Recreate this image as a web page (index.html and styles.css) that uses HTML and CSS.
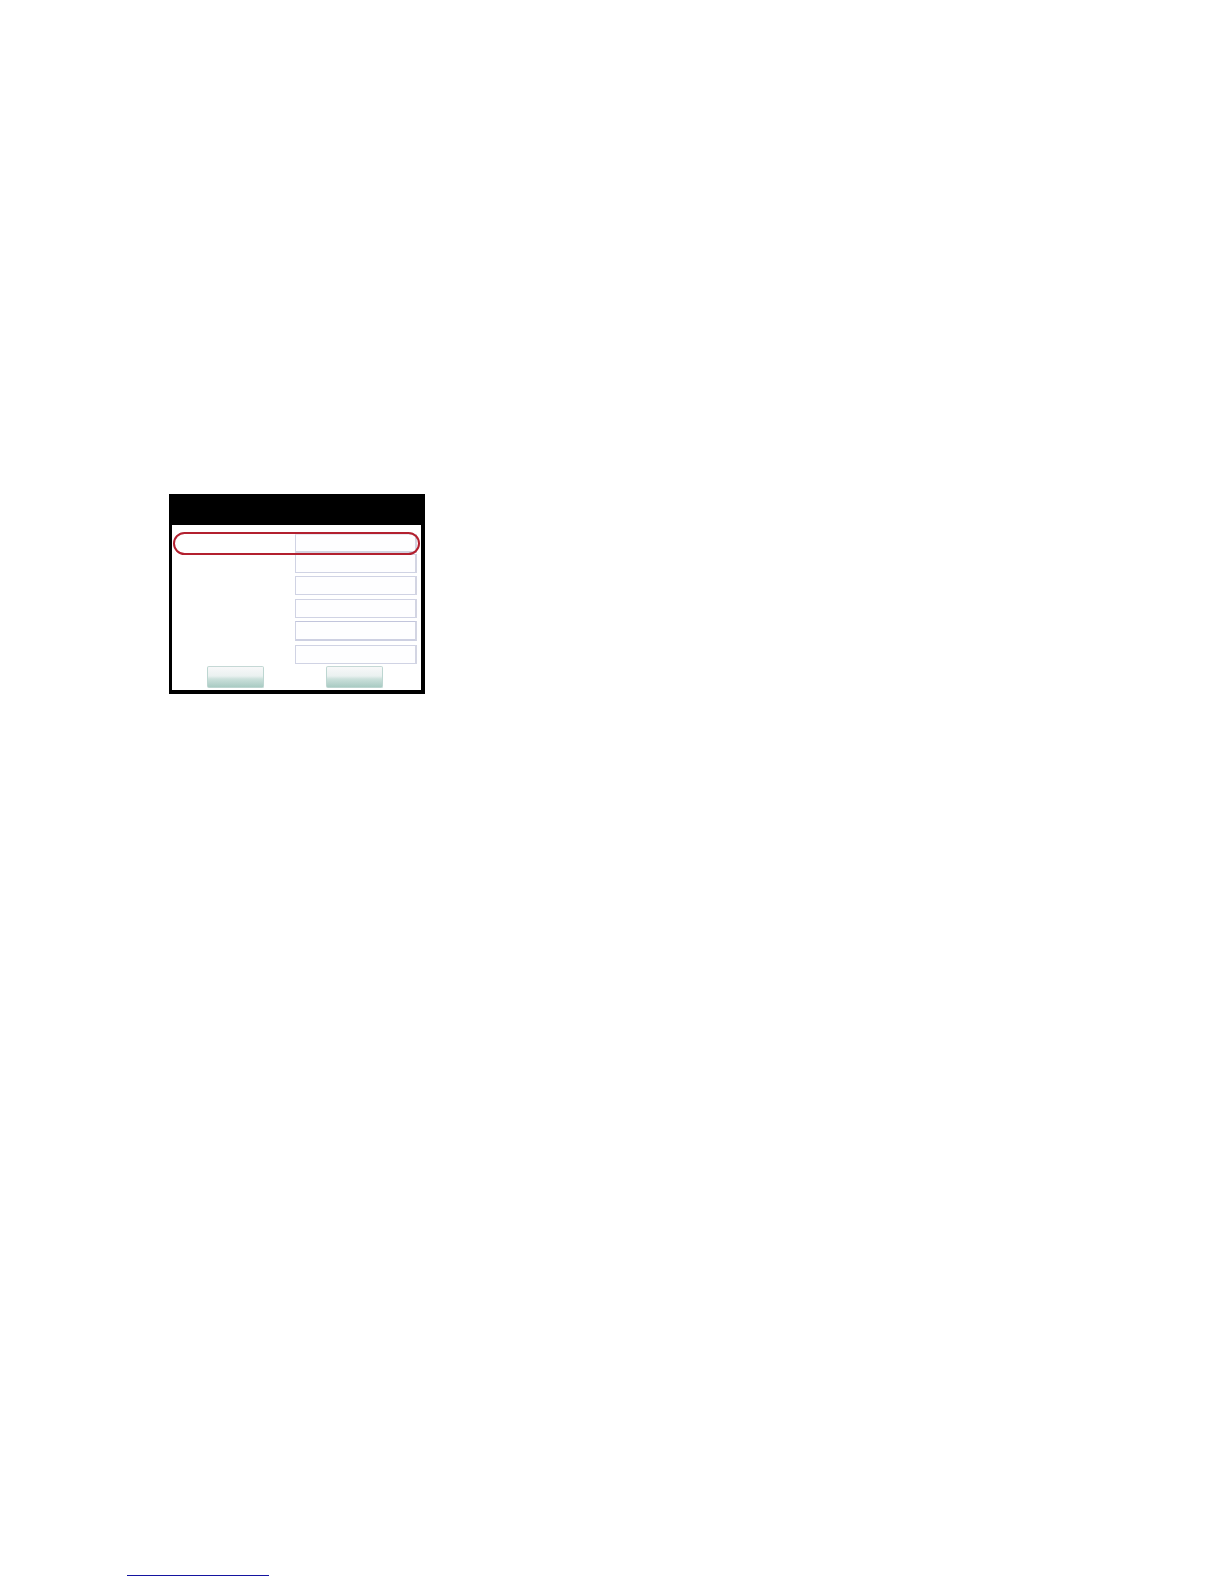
FILE: index.html
```html
<!DOCTYPE html>
<html lang="en">
<head>
<meta charset="utf-8">
<title>Settings</title>
<link rel="stylesheet" href="styles.css">
</head>

<body>
<main>
<form class="panel">
	<div class="fields">
		<input class="field first" type="text" aria-label="Setting 1">
		<input class="field" type="text" aria-label="Setting 2">
		<input class="field" type="text" aria-label="Setting 3">
		<input class="field" type="text" aria-label="Setting 4">
		<input class="field strong" type="text" aria-label="Setting 5">
		<input class="field" type="text" aria-label="Setting 6">
		<div class="highlight"></div>
	</div>
	<div class="buttons">
		<button class="btn" type="button" aria-label="OK"></button>
		<button class="btn" type="button" aria-label="Cancel"></button>
	</div>
</form>
</main>
<footer>
	<a class="footer_link" href="#" aria-label="Contents"></a>
</footer>
</body>
</html>
```

FILE: styles.css
```css
* {
	box-sizing: border-box;
}
body {
	margin: 0;
	min-height: 100vh;
	display: flex;
	flex-direction: column;
	justify-content: space-between;
	background: #fff;
	font-family: "Liberation Sans", Arial, sans-serif;
}
main {
	padding: 494px 16px 16px 169px;
}
.panel {
	width: 256px;
	max-width: 100%;
	background: #fff;
	border: solid #000;
	border-width: 31px 4px 4px 3px;
}
.fields {
	position: relative;
	display: grid;
	grid-template-rows: 20px 22px 23px 22px 24px 19px;
	justify-items: end;
	padding: 9px 4px 0 0;
}
.field {
	width: 50%;
	height: 19px;
	padding: 0 4px;
	background: #fefeff;
	border: 1px solid #d0d3e4;
	border-right: 2px solid #d3d5e3;
	border-radius: 0;
	font: 12px "Liberation Sans", Arial, sans-serif;
}
.field.first {
	border-top-color: #e8e8f0;
	border-bottom: 2px solid #d3d3e0;
}
.field.strong {
	height: 20px;
	border-top-color: #c2c5dc;
	border-bottom: 2px solid #cdd0e2;
}
/* red ring over the first row */
.highlight {
	position: absolute;
	top: 7px;
	left: 1px;
	right: 1px;
	height: 23px;
	border: 2px solid #b3202f;
	border-radius: 12px;
	pointer-events: none;
}
.buttons {
	display: flex;
	gap: 62px;
	padding: 2px 0 2px 35px;
}
.btn {
	width: 57px;
	height: 22px;
	padding: 0;
	border: 1px solid #bdd6d1;
	border-top-color: #c5d8d5;
	border-radius: 2px;
	background: linear-gradient(#f8f8f9 0%, #eaf1f0 45%, #cbe0db 60%, #a9cbc3 100%);
}
footer {
	padding: 0 16px 8px 127px;
}
.footer_link {
	display: block;
	width: 142px;
	height: 16px;
	border-bottom: 1px solid #1414a0;
}
```
